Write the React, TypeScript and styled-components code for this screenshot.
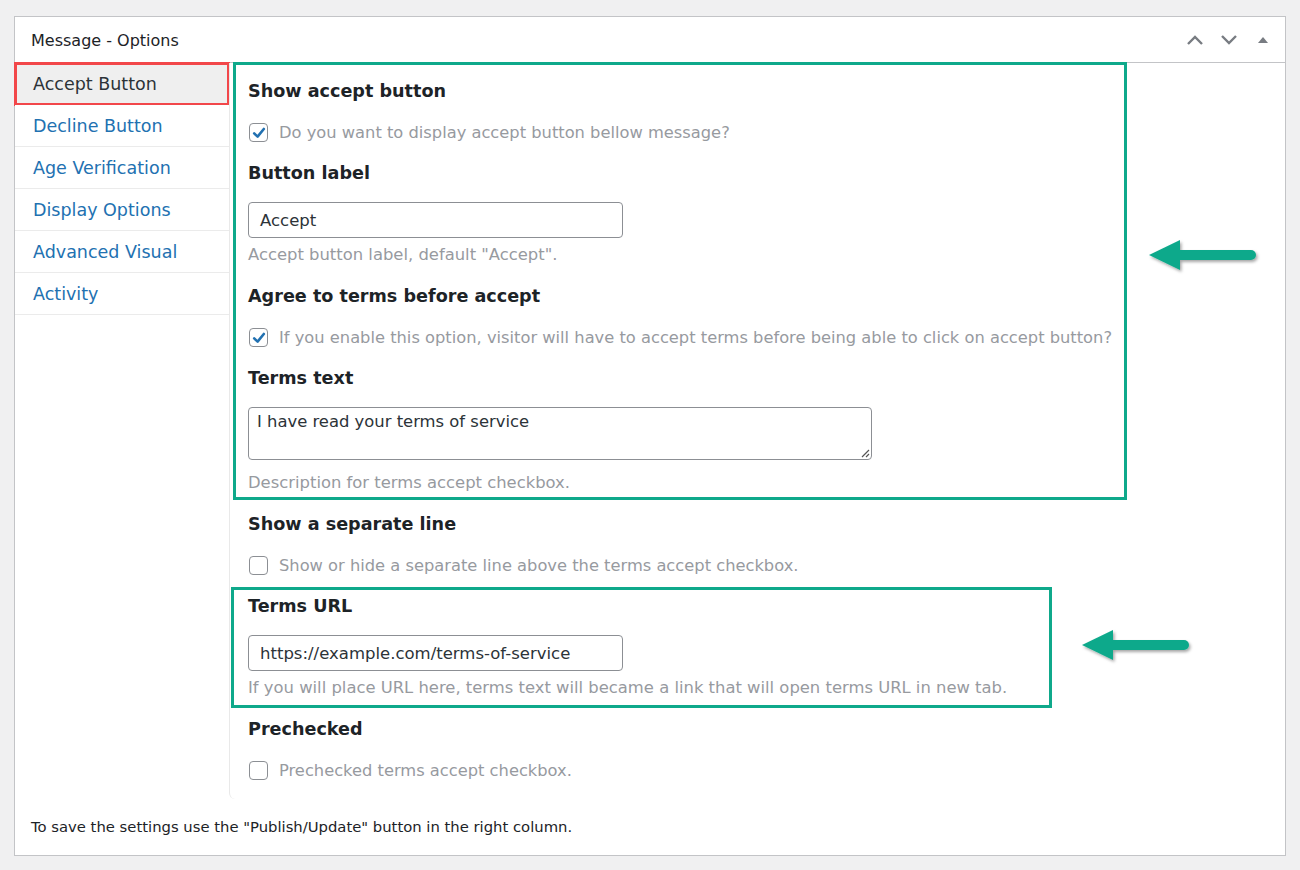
import styled, { createGlobalStyle } from 'styled-components';

const GlobalStyle = createGlobalStyle`
  html, body {
    margin: 0;
    padding: 0;
    background: #f0f0f1;
  }
  body {
    font-family: "DejaVu Sans", Verdana, sans-serif;
    color: #1d2327;
  }
`;

const GREEN = '#0fa98b';

const Page = styled.div`
  padding: 16px 14px 0 14px;
`;

const Panel = styled.div`
  position: relative;
  width: 1270px;
  background: #fff;
  border: 1px solid #c3c4c7;
`;

const Header = styled.div`
  display: flex;
  align-items: center;
  justify-content: space-between;
  height: 45px;
  padding: 0 12px 0 16px;
  border-bottom: 1px solid #c3c4c7;
`;

const Title = styled.h2`
  margin: 0;
  padding-top: 1px;
  font-family: "DejaVu Sans", Verdana, sans-serif;
  font-size: 16px;
  font-weight: 400;
  color: #1d2327;
`;

const HeaderActions = styled.div`
  display: flex;
  align-items: center;
  gap: 14px;
  color: #787c82;
`;

const IconButton = styled.span`
  display: inline-flex;
  width: 20px;
  height: 20px;
  align-items: center;
  justify-content: center;
`;

const Body = styled.div`
  display: flex;
`;

const Sidebar = styled.ul`
  list-style: none;
  margin: 0;
  padding: 0;
  width: 214px;
  flex: none;
`;

const TabItem = styled.li<{ $active?: boolean }>`
  position: relative;
  height: 41px;
  display: flex;
  align-items: center;
  padding-left: 18px;
  border-bottom: 1px solid #ebebeb;
  font-size: 17.5px;
  color: ${(p) => (p.$active ? '#2c3338' : '#2271b1')};
  background: ${(p) => (p.$active ? '#efefef' : '#fff')};
  outline: ${(p) => (p.$active ? '3px solid #f2474a' : 'none')};
  outline-offset: -2px;
`;

const Content = styled.div`
  position: relative;
  flex: 1;
  padding: 8px 18px 8px 18px;
  border-left: 1px solid #e9e9e9;
  border-bottom-left-radius: 6px;
`;

const Heading = styled.div`
  height: 41px;
  line-height: 41px;
  font-size: 17.6px;
  font-weight: 700;
  color: #1d2327;
`;

const CheckRow = styled.label`
  height: 41px;
  display: flex;
  align-items: center;
  gap: 11px;
  font-size: 16.3px;
  color: #979a9f;
`;

const Box = styled.span`
  width: 17px;
  height: 17px;
  margin-left: 1px;
  flex: none;
  border: 1px solid #8c8f94;
  border-radius: 4px;
  display: inline-flex;
  align-items: center;
  justify-content: center;
  background: #fff;
`;

const TextInput = styled.div`
  margin-top: 8px;
  width: 375px;
  height: 36px;
  box-sizing: border-box;
  border: 1px solid #8c8f94;
  border-radius: 4px;
  display: flex;
  align-items: center;
  padding-left: 11px;
  font-size: 16.5px;
  color: #2c3338;
`;

const TextArea = styled.div`
  position: relative;
  margin-top: 8px;
  margin-bottom: 13px;
  width: 624px;
  height: 53px;
  box-sizing: border-box;
  border: 1px solid #8c8f94;
  border-radius: 4px;
  padding: 4px 8px;
  font-family: "DejaVu Sans", sans-serif;
  font-size: 16.4px;
  color: #2c3338;
`;

const Grip = styled.svg`
  position: absolute;
  right: 1px;
  bottom: 1px;
`;

const Help = styled.p`
  margin: 7px 0 11px;
  line-height: 20px;
  font-size: 16.4px;
  color: #979a9f;
`;

const Highlight = styled.div<{ $left: number; $top: number; $w: number; $h: number }>`
  position: absolute;
  left: ${(p) => p.$left}px;
  top: ${(p) => p.$top}px;
  width: ${(p) => p.$w}px;
  height: ${(p) => p.$h}px;
  box-sizing: border-box;
  border: 3px solid ${GREEN};
  pointer-events: none;
`;

const Arrow = styled.svg<{ $left: number; $top: number }>`
  position: absolute;
  left: ${(p) => p.$left}px;
  top: ${(p) => p.$top}px;
  overflow: visible;
`;

const Footer = styled.div`
  padding: 18px 16px 18px;
  line-height: 20px;
  font-family: "DejaVu Sans", sans-serif;
  font-size: 14.8px;
  color: #1d2327;
`;

const Check = () => (
  <svg width="14" height="14" viewBox="0 0 14 14">
    <path d="M2.2 7.4 L5.6 10.6 L11.8 3" fill="none" stroke="#2271b1" strokeWidth="2.6" strokeLinecap="round" strokeLinejoin="round" />
  </svg>
);

const Checkbox = ({ checked, label }: { checked?: boolean; label: string }) => (
  <CheckRow>
    <Box>{checked && <Check />}</Box>
    {label}
  </CheckRow>
);

const GreenArrow = ({ left, top }: { left: number; top: number }) => (
  <Arrow $left={left} $top={top} width="110" height="34" viewBox="0 0 110 34">
    <defs>
      <filter id="sh" x="-20%" y="-40%" width="140%" height="180%">
        <feDropShadow dx="1.5" dy="2" stdDeviation="1.6" floodColor="#000" floodOpacity="0.35" />
      </filter>
    </defs>
    <g filter="url(#sh)">
      <path d="M28 12 H102 A5 5 0 0 1 102 22 H28 Z" fill={GREEN} />
      <path d="M0 17 L31 2 L31 32 Z" fill={GREEN} />
    </g>
  </Arrow>
);

const tabs = ['Accept Button', 'Decline Button', 'Age Verification', 'Display Options', 'Advanced Visual', 'Activity'];

export default function App() {
  return (
    <>
      <GlobalStyle />
      <Page>
        <Panel>
          <Header>
            <Title>Message - Options</Title>
            <HeaderActions>
              <IconButton>
                <svg width="18" height="12" viewBox="0 0 18 12">
                  <path d="M2 10 L9 3 L16 10" fill="none" stroke="#787c82" strokeWidth="2.4" />
                </svg>
              </IconButton>
              <IconButton>
                <svg width="18" height="12" viewBox="0 0 18 12">
                  <path d="M2 2 L9 9 L16 2" fill="none" stroke="#787c82" strokeWidth="2.4" />
                </svg>
              </IconButton>
              <IconButton>
                <svg width="12" height="10" viewBox="0 0 12 10">
                  <path d="M1 8 L6 2 L11 8 Z" fill="#787c82" />
                </svg>
              </IconButton>
            </HeaderActions>
          </Header>
          <Body>
            <Sidebar>
              {tabs.map((t, i) => (
                <TabItem key={t} $active={i === 0}>
                  {t}
                </TabItem>
              ))}
            </Sidebar>
            <Content>
              <Heading>Show accept button</Heading>
              <Checkbox checked label="Do you want to display accept button bellow message?" />
              <Heading>Button label</Heading>
              <TextInput>Accept</TextInput>
              <Help>Accept button label, default "Accept".</Help>
              <Heading>Agree to terms before accept</Heading>
              <Checkbox
                checked
                label="If you enable this option, visitor will have to accept terms before being able to click on accept button?"
              />
              <Heading>Terms text</Heading>
              <TextArea>
                I have read your terms of service
                <Grip width="10" height="10" viewBox="0 0 10 10">
                  <path d="M9 2 L2 9 M9 6 L6 9" stroke="#555" strokeWidth="1.2" />
                </Grip>
              </TextArea>
              <Help>Description for terms accept checkbox.</Help>
              <Heading>Show a separate line</Heading>
              <Checkbox label="Show or hide a separate line above the terms accept checkbox." />
              <Heading>Terms URL</Heading>
              <TextInput>https://example.com/terms-of-service</TextInput>
              <Help>If you will place URL here, terms text will became a link that will open terms URL in new tab.</Help>
              <Heading>Prechecked</Heading>
              <Checkbox label="Prechecked terms accept checkbox." />

              <Highlight $left={3} $top={-1} $w={894} $h={438} />
              <Highlight $left={1} $top={524} $w={821} $h={121} />
            </Content>
          </Body>
          <Footer>To save the settings use the "Publish/Update" button in the right column.</Footer>
          <GreenArrow left={1134} top={221} />
          <GreenArrow left={1067} top={611} />
        </Panel>
      </Page>
    </>
  );
}
